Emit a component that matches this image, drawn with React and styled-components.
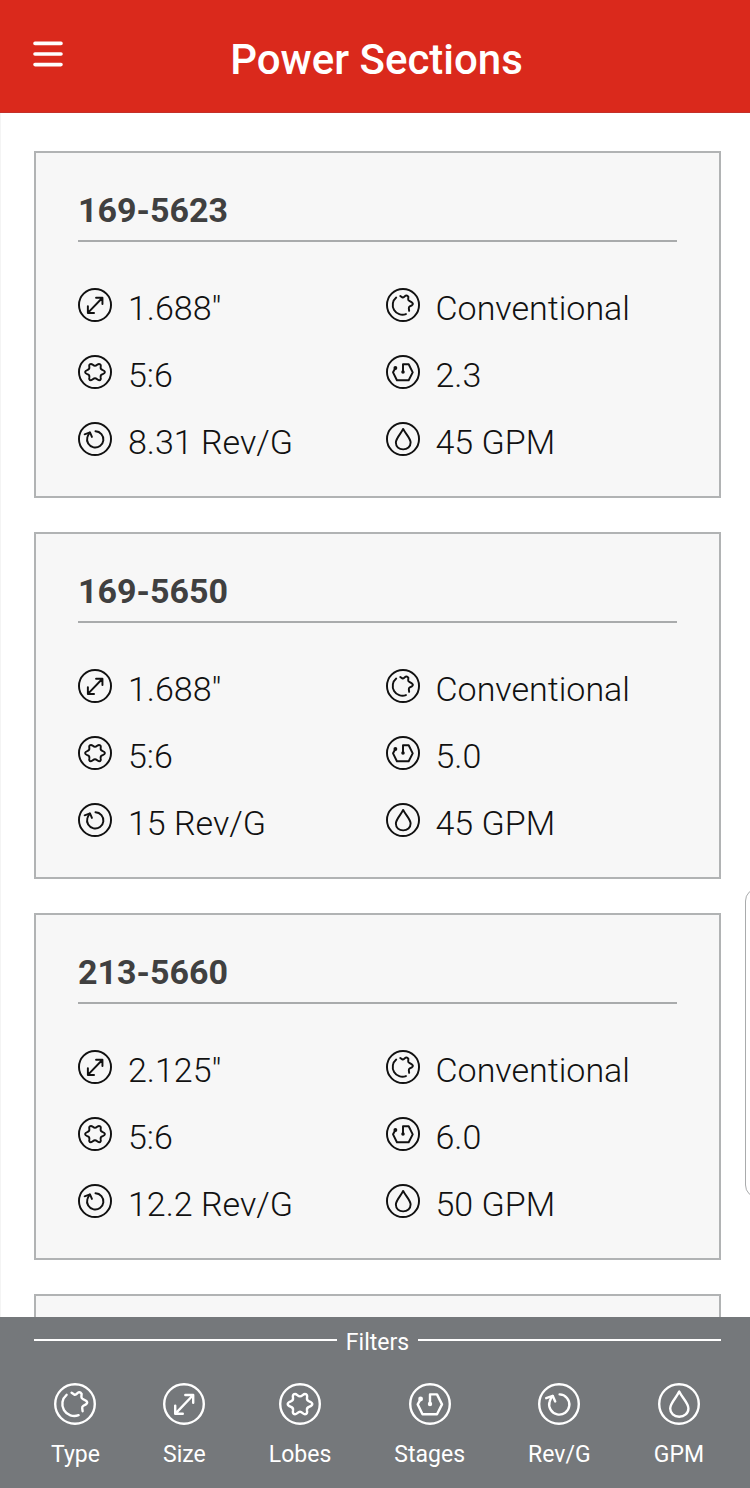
import React, { useState } from "react";
import styled, { createGlobalStyle } from "styled-components";

const powerSections = [
  { id: "169-5623", size: '1.688"', type: "Conventional", lobes: "5:6", stages: "2.3", rev: "8.31 Rev/G", gpm: "45 GPM" },
  { id: "169-5650", size: '1.688"', type: "Conventional", lobes: "5:6", stages: "5.0", rev: "15 Rev/G", gpm: "45 GPM" },
  { id: "213-5660", size: '2.125"', type: "Conventional", lobes: "5:6", stages: "6.0", rev: "12.2 Rev/G", gpm: "50 GPM" },
];

const fields = ["size", "type", "lobes", "stages", "rev", "gpm"];

const filters = [
  { name: "type", label: "Type" },
  { name: "size", label: "Size" },
  { name: "lobes", label: "Lobes" },
  { name: "stages", label: "Stages" },
  { name: "rev", label: "Rev/G" },
  { name: "gpm", label: "GPM" },
];

const glyphs = {
  type: (
    <>
      <path d="M12.6 11.8A12 12 0 0 0 24.6 32.2" />
      <path d="M17.6 9.8L20.2 11.6Q21.2 12 22.2 11.2L24.4 9.4Q26.4 8.8 27.6 10.8L27.4 14Q27.4 15.4 28.8 16L32 17.8Q34.4 19.6 32 21.4L29.4 22.8Q28 23.6 28.2 25L28.6 28.2" />
    </>
  ),
  size: <path d="M12.2 30.8L30.2 12M22.3 12H30.2V19.8M12.2 22.6V30.8H19.8" />,
  lobes: (
    <path d="M21 13.4C23.3 13.4 24 11 26 11C28.2 11 28.4 12.8 28 14.8C27.7 16.6 28.1 17.6 29.8 18.2C31.7 18.9 33.3 19.4 33.3 21.1C33.3 22.8 31.7 23.3 29.8 24C28.1 24.6 27.7 25.6 28 27.4C28.4 29.4 28.2 31.2 26 31.2C24 31.2 23.3 28.8 21 28.8C18.7 28.8 18 31.2 16 31.2C13.8 31.2 13.6 29.4 14 27.4C14.3 25.6 13.9 24.6 12.2 24C10.3 23.3 8.7 22.8 8.7 21.1C8.7 19.4 10.3 18.9 12.2 18.2C13.9 17.6 14.3 16.6 14 14.8C13.6 12.8 13.8 11 16 11C18 11 18.7 13.4 21 13.4Z" />
  ),
  stages: (
    <>
      <path d="M11.6 16L8.7 21.4L13.5 31.2H28L33 21.4L28 11.4H21V21" />
      <circle cx="11.6" cy="16" r="1.2" />
      <circle cx="21" cy="21" r="1" />
    </>
  ),
  rev: (
    <>
      <path d="M21.6 11.4A10.1 10.1 0 1 1 11.6 18.6Q12.4 15.6 14.6 13" />
      <path d="M8.2 15.2L14.8 12.9L17.2 18.4" />
    </>
  ),
  gpm: (
    <path d="M21.2 8.6C18.8 14 12.2 20 12.2 25.4C12.2 30.4 16 33.8 21.2 33.8C26.4 33.8 30.4 30.4 30.4 25.4C30.4 20 23.6 14 21.2 8.6Z" />
  ),
};

const RoundIcon = ({ name, size }) => (
  <IconSvg viewBox="0 0 42 42" $size={size} aria-hidden="true">
    <circle cx="21" cy="21" r="19.8" />
    {glyphs[name]}
  </IconSvg>
);

export default function App() {
  const [activeFilter, setActiveFilter] = useState(null);

  return (
    <Container>
      <GlobalStyle />
      <Header>
        <MenuButton aria-label="Menu">
          <MenuIcon viewBox="0 0 30 26" aria-hidden="true">
            <path d="M2 2.4H28M2 13H28M2 23.6H28" />
          </MenuIcon>
        </MenuButton>
        <Title>Power Sections</Title>
      </Header>
      <SectionList>
        {powerSections.map((section) => (
          <Card key={section.id}>
            <CardTitle>{section.id}</CardTitle>
            <SpecGrid>
              {fields.map((field) => (
                <Spec key={field}>
                  <RoundIcon name={field} size={34} />
                  {section[field]}
                </Spec>
              ))}
            </SpecGrid>
          </Card>
        ))}
        <Card />
      </SectionList>
      <FilterBar>
        <FilterHeading>Filters</FilterHeading>
        <FilterRow>
          {filters.map(({ name, label }) => (
            <FilterButton
              key={name}
              aria-pressed={activeFilter === name}
              onClick={() => setActiveFilter(name)}
            >
              <RoundIcon name={name} size={42} />
              {label}
            </FilterButton>
          ))}
        </FilterRow>
      </FilterBar>
      <EdgeHandle />
    </Container>
  );
}

const GlobalStyle = createGlobalStyle`
  * {
    box-sizing: border-box;
  }
  body {
    margin: 0;
    font-family: Roboto, sans-serif;
    background: #ffffff;
  }
`;
const Container = styled.div`
  position: relative;
  display: flex;
  flex-direction: column;
  height: 100vh;
  overflow: hidden;
`;
const Header = styled.header`
  display: grid;
  grid-template-columns: 1fr auto 1fr;
  align-items: start;
  flex-shrink: 0;
  height: 113px;
  padding: 35px 30px 0 33px;
  background: #da291c;
  border-bottom: 1px solid #c4302a;
`;
const MenuButton = styled.button`
  display: flex;
  justify-self: start;
  padding: 6px 0;
  border: none;
  background: none;
  cursor: pointer;
`;
const MenuIcon = styled.svg`
  width: 30px;
  height: 26px;
  stroke: #ffffff;
  stroke-width: 3.6;
  stroke-linecap: round;
`;
const Title = styled.h1`
  margin: 0;
  font-weight: 500;
  font-size: 42px;
  line-height: 50px;
  color: #ffffff;
`;
const SectionList = styled.main`
  flex: 1;
  min-height: 0;
  overflow-y: auto;
  scrollbar-width: none;
  padding: 38px 29px 34px 33px;
  border-left: 1px solid #f4f4f4;
`;
const Card = styled.article`
  min-height: 347px;
  padding: 37px 42px 34px;
  border: 2px solid #b1b3b4;
  background: #f7f7f7;

  & + & {
    margin-top: 34px;
  }
`;
const CardTitle = styled.h2`
  margin: 0 0 46px;
  padding-bottom: 10px;
  border-bottom: 2px solid #a9abac;
  font-weight: 700;
  font-size: 34px;
  line-height: 40px;
  color: #404040;
`;
const SpecGrid = styled.ul`
  display: grid;
  grid-template-columns: 1fr 1fr;
  gap: 27px 16px;
  margin: 0;
  padding: 0;
  list-style: none;
`;
const Spec = styled.li`
  display: flex;
  align-items: flex-start;
  column-gap: 16px;
  font-weight: 300;
  font-size: 34px;
  line-height: 40px;
  color: #111111;
  white-space: nowrap;
`;
const IconSvg = styled.svg`
  flex-shrink: 0;
  width: ${({ $size }) => $size}px;
  height: ${({ $size }) => $size}px;
  fill: none;
  stroke: currentColor;
  stroke-width: 2.4;
  stroke-linecap: round;
  stroke-linejoin: round;
`;
const FilterBar = styled.footer`
  flex-shrink: 0;
  padding: 12px 29px 19px 34px;
  background: #75787b;
  color: #ffffff;
`;
const FilterHeading = styled.h3`
  display: flex;
  align-items: center;
  column-gap: 9px;
  margin: 0 0 26px;
  font-weight: 400;
  font-size: 23px;
  line-height: 28px;

  &::before,
  &::after {
    content: "";
    flex: 1;
    height: 2px;
    margin-bottom: 6px;
    background: #ffffff;
  }
`;
const FilterRow = styled.div`
  display: flex;
  justify-content: space-between;
  padding: 0 17px;
`;
const FilterButton = styled.button`
  display: flex;
  flex-direction: column;
  align-items: center;
  row-gap: 16px;
  padding: 0;
  border: none;
  background: none;
  color: inherit;
  font-family: inherit;
  font-size: 23px;
  line-height: 28px;
  cursor: pointer;
`;
/* pull-out tab that peeks in over the right edge */
const EdgeHandle = styled.div`
  position: absolute;
  top: 888px;
  right: -21px;
  width: 26px;
  height: 310px;
  border: 1px solid #a9abac;
  border-radius: 14px;
  background: #ffffff;
`;
